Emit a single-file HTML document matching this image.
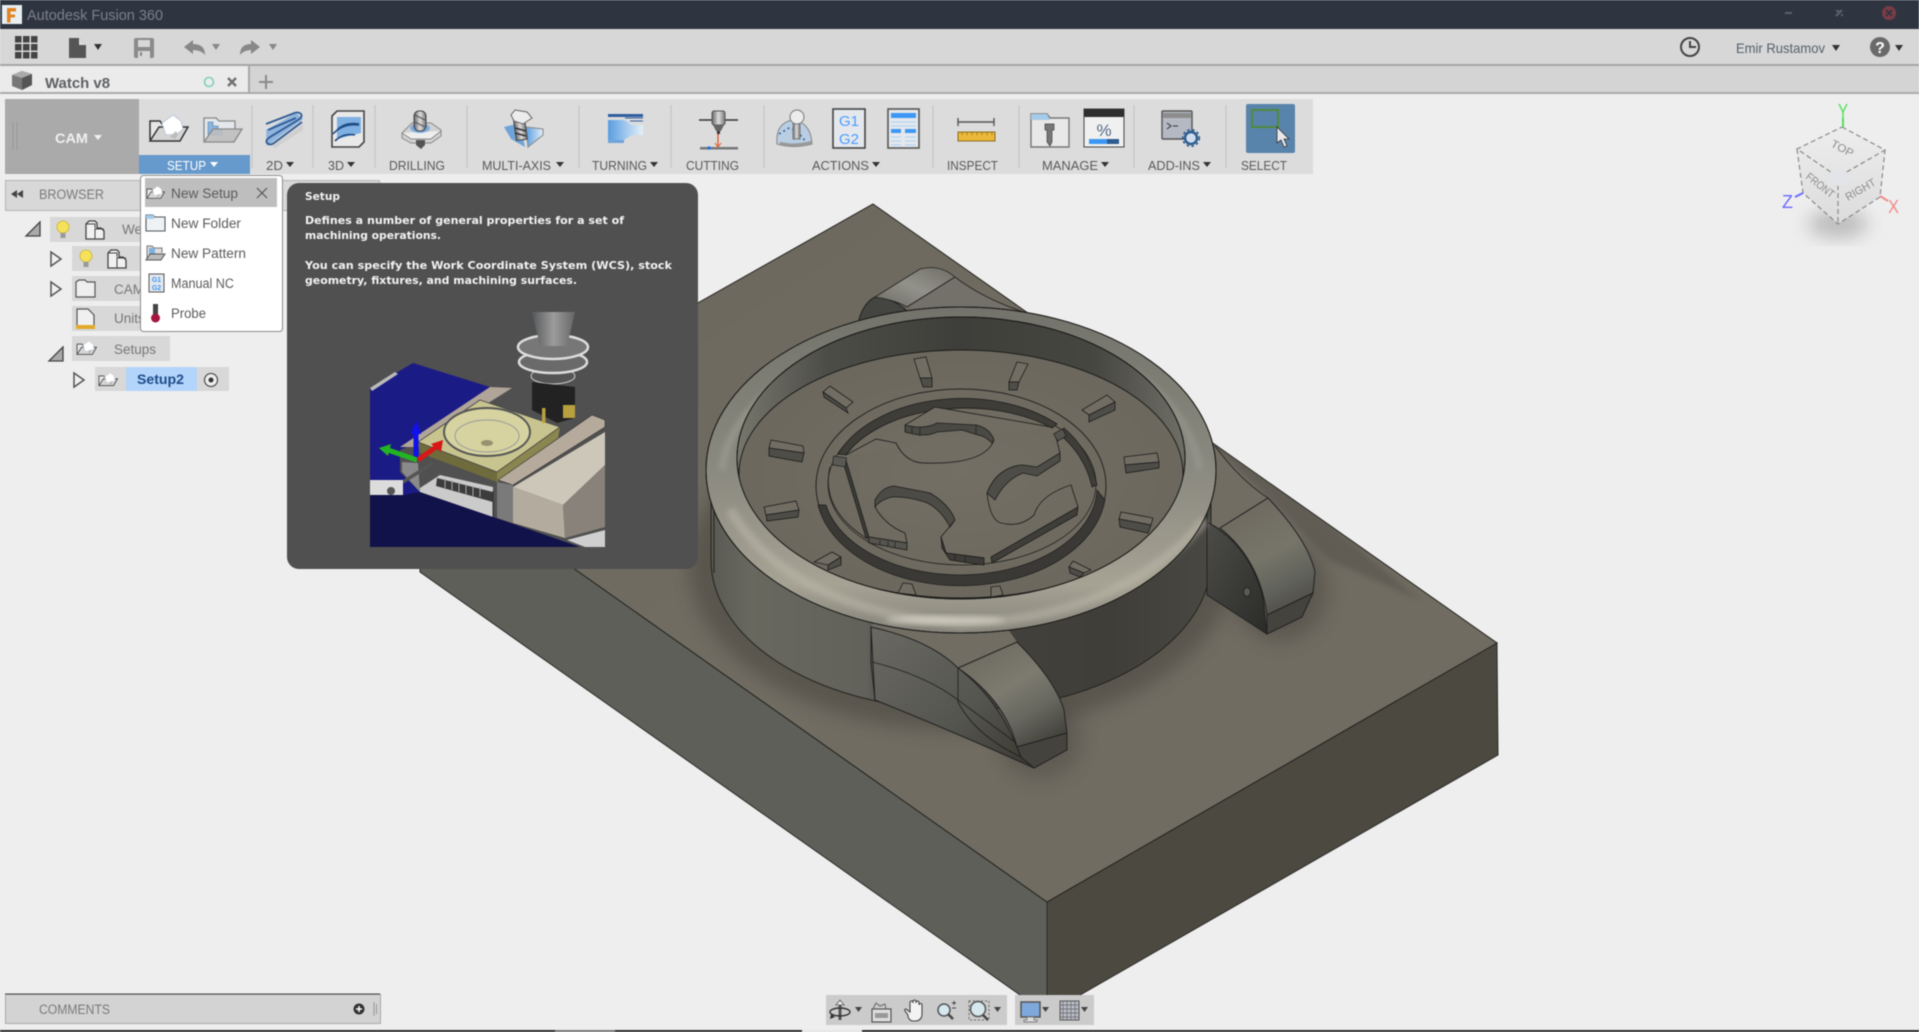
<!DOCTYPE html>
<html><head><meta charset="utf-8"><title>Autodesk Fusion 360</title>
<style>
html,body{margin:0;padding:0;background:#eee;width:1919px;height:1032px;overflow:hidden}
svg{display:block;position:absolute;left:0;top:0;filter:blur(.5px)}
text{font-family:"Liberation Sans",sans-serif}
.l{font-size:13px;fill:#5a5a5a}
.m{font-size:13.5px;fill:#5c5c5c}
.tt{font-family:"DejaVu Sans",sans-serif;font-weight:bold;font-size:10.5px;fill:#f2f2f2}
</style></head><body>
<svg width="1919" height="1032" viewBox="0 0 1919 1032" xmlns="http://www.w3.org/2000/svg">
<defs>
<linearGradient id="gTop" x1="0" y1="0" x2="1" y2="1"><stop offset="0" stop-color="#6b675d"/><stop offset=".5" stop-color="#716d63"/><stop offset="1" stop-color="#6f6b61"/></linearGradient>
<linearGradient id="gBody" x1="0" y1="0" x2="1" y2="0"><stop offset="0" stop-color="#5a5a54"/><stop offset=".08" stop-color="#68685f"/><stop offset=".31" stop-color="#62625b"/><stop offset=".37" stop-color="#454440"/><stop offset=".8" stop-color="#403e39"/><stop offset="1" stop-color="#4a4842"/></linearGradient>
<linearGradient id="gRing" x1="0" y1="0" x2="0" y2="1"><stop offset="0" stop-color="#74736b"/><stop offset=".5" stop-color="#8b8a80"/><stop offset=".85" stop-color="#a6a294"/><stop offset="1" stop-color="#85837a"/></linearGradient>
<linearGradient id="gWall" x1="0" y1="0" x2="1" y2="0"><stop offset="0" stop-color="#77766c"/><stop offset=".2" stop-color="#4d4d48"/><stop offset=".5" stop-color="#3e3e3a"/><stop offset=".8" stop-color="#474742"/><stop offset="1" stop-color="#6f6e66"/></linearGradient>
<radialGradient id="gDial"><stop offset="0" stop-color="#736f65"/><stop offset="1" stop-color="#6c685e"/></radialGradient>
<linearGradient id="gLug" gradientUnits="userSpaceOnUse" x1="985" y1="650" x2="1040" y2="745"><stop offset="0" stop-color="#6f6c62"/><stop offset=".4" stop-color="#7d7b70"/><stop offset=".7" stop-color="#67675f"/><stop offset="1" stop-color="#45443e"/></linearGradient>
<linearGradient id="gLug2" gradientUnits="userSpaceOnUse" x1="1240" y1="515" x2="1290" y2="610"><stop offset="0" stop-color="#6f6b61"/><stop offset=".45" stop-color="#777569"/><stop offset=".75" stop-color="#62635c"/><stop offset="1" stop-color="#4f4e48"/></linearGradient>
<linearGradient id="gWeb" x1="0" y1="0" x2="1" y2="1"><stop offset="0" stop-color="#6a6a63"/><stop offset=".6" stop-color="#55554f"/><stop offset="1" stop-color="#38372f"/></linearGradient>
<linearGradient id="gDark" x1="0" y1="0" x2="1" y2="1"><stop offset="0" stop-color="#4c4c48"/><stop offset="1" stop-color="#2b2b29"/></linearGradient>
<linearGradient id="gCyl" x1="0" y1="1" x2="1" y2="0"><stop offset="0" stop-color="#6c6c64"/><stop offset=".5" stop-color="#93928a"/><stop offset="1" stop-color="#6e6c64"/></linearGradient>
<linearGradient id="gBlue" x1="0" y1="0" x2="1" y2="0"><stop offset="0" stop-color="#5a9de0"/><stop offset="1" stop-color="#e4f0fa"/></linearGradient>
<linearGradient id="gSilver" x1="0" y1="0" x2="1" y2="0"><stop offset="0" stop-color="#666"/><stop offset=".5" stop-color="#ddd"/><stop offset="1" stop-color="#777"/></linearGradient>
<linearGradient id="gCube" x1="0" y1="0" x2="0" y2="1"><stop offset="0" stop-color="#ededed"/><stop offset="1" stop-color="#dcdcdc"/></linearGradient>
<linearGradient id="gCone" x1="0" y1="0" x2="1" y2="0"><stop offset="0" stop-color="#55585a"/><stop offset=".5" stop-color="#9c9c9c"/><stop offset="1" stop-color="#666"/></linearGradient>
<filter id="b6" x="-30%" y="-30%" width="160%" height="160%"><feGaussianBlur stdDeviation="9"/></filter>
<filter id="b2" x="-30%" y="-30%" width="160%" height="160%"><feGaussianBlur stdDeviation="3"/></filter>
<clipPath id="cTop"><polygon points="873,204 1497,643 1047,902 420,460"/></clipPath>
<clipPath id="cHole"><ellipse cx="961" cy="458" rx="224" ry="141"/></clipPath>
<symbol id="openf" viewBox="0 0 41 27"><path d="M2 25V6h10l2 3h9" fill="#e6e6e6" stroke="#333" stroke-width="1.500"/><path d="M2 26l9-14h29l-8 14z" fill="#d4d4d4" stroke="#333" stroke-width="1.500"/><path d="M14 8L25 0l8 6 2 8-6 5-11 1z" fill="#fff" stroke="#b5c4d8" stroke-width=".8"/><path d="M22 22l6-6 2 4-3 4z" fill="#bbb"/></symbol>
<symbol id="comp" viewBox="0 0 20 20"><path d="M1 19V4l3-3h6l2 2v5h4l3 3v8z" fill="#f1f1f1" stroke="#444" stroke-width="1.300"/><path d="M10 19V9h9M1 4h9v4" fill="none" stroke="#444"/></symbol>
<symbol id="bulb" viewBox="0 0 14 20"><circle cx="7" cy="7" r="6" fill="#f6e25a" stroke="#cdb94a"/><rect x="4.500" y="13" width="5" height="5" fill="#999"/></symbol>
</defs>

<rect width="1919" height="1032" fill="#eeeeee"/>

<!-- BLOCK -->
<polygon points="420,460 1047,902 1047,1014 420,572" fill="#5f5f59" stroke="#2a2a28"/>
<polygon points="1047,902 1497,643 1498,755 1047,1014" fill="#4c4941" stroke="#2a2a28"/>
<polygon points="873,204 1497,643 1047,902 420,460" fill="url(#gTop)" stroke="#23231f"/>
<g clip-path="url(#cTop)">
 <ellipse cx="961" cy="565" rx="272" ry="166" fill="#3a3832" opacity=".42" filter="url(#b6)"/>
 <ellipse cx="1040" cy="740" rx="42" ry="40" fill="#3a3832" opacity=".3" filter="url(#b6)"/>
 <ellipse cx="1280" cy="590" rx="48" ry="52" fill="#3a3832" opacity=".35" filter="url(#b6)"/>
 <path d="M1030,313 Q1190,420 1268,498 L1330,560 L1420,600 L1100,330Z" fill="#45433c" opacity=".35" filter="url(#b2)"/>
</g>

<!-- back lug -->
<path d="M857,330 Q860,305 875,297 Q895,298 908,312 L880,330Z" fill="#444441" stroke="#222"/>
<path d="M875,297 L920,269 Q940,264 955,277 L907,307 Q895,300 875,297Z" fill="url(#gCyl)" stroke="#222" stroke-width=".8"/>
<path d="M955,277 L907,307 L1000,330 L1030,314 Q985,300 955,277Z" fill="#74716a"/>
<path d="M955,277 Q985,300 1030,314" fill="none" stroke="#2a2a26"/>
<path d="M955,277 L907,307" stroke="#222" fill="none"/>

<!-- web right -->
<path d="M1215,446 Q1240,478 1268,498 L1220,528 L1207,522 L1190,470Z" fill="#716d63"/>
<path d="M1215,446 Q1240,480 1268,498 M1268,498 L1220,528" fill="none" stroke="#2a2a26"/>

<!-- body -->
<path d="M711,470 V560 A250,150 0 0 0 1211,560 V470 Z" fill="url(#gBody)" stroke="#23231f"/>
<path d="M714,470 V573 M1207,470 V595" stroke="#23231f" fill="none"/>

<!-- back right lug -->
<path d="M1207,522 Q1250,545 1263,598 L1267,634 L1207,595Z" fill="url(#gDark)" stroke="#222"/>
<ellipse cx="1247" cy="592" rx="3.500" ry="4.500" fill="#5a5a55" stroke="#222"/>
<path d="M1220,528 L1268,498 Q1308,540 1315,572 L1313,593 L1267,615 Q1260,560 1220,528Z" fill="url(#gLug2)" stroke="#222"/>
<path d="M1267,615 L1313,593 L1302,617 L1267,634Z" fill="#45433d" stroke="#222"/>

<!-- front lug -->
<path d="M871,627 Q925,645 958,668 L1017,642 L1005,625 L880,615Z" fill="#716d63"/>
<path d="M871,627 Q930,640 958,668 Q1000,700 1020,755 L1034,768 Q950,730 875,700Z" fill="url(#gWeb)" stroke="#222"/>
<path d="M872,662 Q925,675 958,700 M958,668 V702 Q975,735 1021,757 M958,700 L1015,742" fill="none" stroke="#222" stroke-width=".9"/>
<path d="M958,668 L1017,642 Q1055,680 1064,710 L1067,733 L1017,747 Q1005,700 958,668Z" fill="url(#gLug)" stroke="#222"/>
<path d="M1017,747 L1067,733 V750 L1034,768 L1021,757Z" fill="#45433d" stroke="#222"/>

<!-- torus -->
<ellipse cx="961" cy="470" rx="255" ry="163" fill="url(#gRing)" stroke="#23231f"/>
<path d="M730,510 Q790,610 961,624 Q1120,618 1205,520" fill="none" stroke="#bdb9ab" stroke-width="9" opacity=".55" filter="url(#b2)"/>
<ellipse cx="945" cy="620" rx="60" ry="4" fill="#e0dcd0" opacity=".7" filter="url(#b2)"/>
<path d="M722,470 Q730,395 860,338" fill="none" stroke="#a5a498" stroke-width="6" opacity=".6" filter="url(#b2)"/>
<path d="M1200,470 Q1190,410 1130,370" fill="none" stroke="#a0a098" stroke-width="6" opacity=".55" filter="url(#b2)"/>
<ellipse cx="961" cy="458" rx="224" ry="141" fill="url(#gWall)" stroke="#1c1c1a"/>
<g clip-path="url(#cHole)">
<ellipse cx="961" cy="474" rx="222" ry="124" fill="url(#gDial)" stroke="#1c1c1a"/>

<!-- inner rings -->
<ellipse cx="961" cy="486" rx="145" ry="97" fill="none" stroke="#23231f"/>
<ellipse cx="962" cy="484" rx="134" ry="81" fill="none" stroke="#23231f" stroke-width=".8"/>
<path d="M838,454 A134,88 0 0 1 1057,424 L1052,428 A130,78 0 0 0 846,455Z" fill="#3e3d38" stroke="#1c1c1a" stroke-width=".8"/>
<path d="M1064,428 Q1090,450 1097,485 L1092,487 Q1085,455 1058,433Z" fill="#3e3d38" stroke="#1c1c1a" stroke-width=".7"/>
<path d="M818,505 A145,97 0 0 0 1105,500 L1097,490 A137,88 0 0 1 826,505Z" fill="#3a3935" stroke="#1c1c1a" stroke-width=".7"/>
<path d="M843,462 L846,460 L869,537 L866,538Z" fill="#3a3a36" stroke="#1c1c1a" stroke-width=".7"/>
<path d="M830,467 Q820,510 869,540" fill="none" stroke="#23231f" stroke-width=".9"/>
<rect x="833" y="457" width="13" height="9" fill="#5a5954" stroke="#1c1c1a" stroke-width=".7" transform="rotate(8 840 461)"/>

<!-- blade 1 -->
<path d="M846,455 L876,439 L896,443 Q905,462 923,463 Q985,465 994,440 Q988,425 976,425 L937,423 Q925,430 905,425 L935,407 L1051,427Z" fill="#716d63"/>
<path d="M846,455 L876,439 L896,443 Q905,462 923,463 Q985,465 994,440 M905,425 L935,407 L1051,427" fill="none" stroke="#23231f" stroke-width=".9"/>
<path d="M905,425 Q925,430 937,423 L976,425 Q990,428 994,440 L992,443 Q985,436 978,435 L962,430 L937,432 Q925,438 905,432Z" fill="#4a4944" stroke="#1c1c1a" stroke-width=".8"/>
<path d="M912,427V434M920,428V436M976,425V434" stroke="#222" stroke-width=".8"/>

<!-- blade 2 -->
<path d="M1060,453 L1060,461 L1037,476 L1023,473 Q1005,480 995,500 L987,493 Q992,480 1001,473 Q1012,465 1023,465 L1037,467Z" fill="#4d4c47" stroke="#1c1c1a" stroke-width=".8"/>
<path d="M1060,453 L1055,433" stroke="#23231f" stroke-width=".9"/>
<path d="M987,493 Q990,520 1001,523 Q1020,528 1034,515 Q1040,495 1071,485 L1078,507" fill="none" stroke="#23231f" stroke-width=".9"/>
<path d="M1078,507 L991,557 L992,563 L1077,515Z" fill="#3f3e39" stroke="#1c1c1a" stroke-width=".8"/>
<rect x="1055" y="431" width="10" height="8" fill="#55544f" stroke="#1c1c1a" stroke-width=".7" transform="rotate(-30 1060 435)"/>

<!-- blade 3 -->
<path d="M875,500 Q882,487 894,486 L930,493 Q950,505 955,520 L950,527 Q940,508 925,502 Q905,496 892,497 Q880,500 875,507Z" fill="#4c4b46" stroke="#1c1c1a" stroke-width=".8"/>
<path d="M875,507 Q885,525 905,533 L907,543 L869,537 M955,520 L941,537 L946,553 L984,558" fill="none" stroke="#23231f" stroke-width=".9"/>
<path d="M869,537 L907,543 V550 L869,543Z" fill="#55544f" stroke="#1c1c1a" stroke-width=".8"/>
<path d="M941,537 L946,553 L984,558 V565 L950,560 L942,548Z" fill="#3d3c38" stroke="#1c1c1a" stroke-width=".8"/>
<path d="M880,540V545M888,541V547M895,542V548M955,555V561M965,556V563" stroke="#222" stroke-width=".8"/>

<!-- ticks -->
<g stroke="#1c1c1a" stroke-width=".8">
<g fill="#716d63">
<polygon points="914,359 926,357 932,378 920,378"/><polygon points="1017,362 1028,364 1019,382 1009,382"/><polygon points="1107,395 1115,402 1089,415 1082,410"/><polygon points="1124,457 1157,453 1159,462 1125,465"/><polygon points="1121,512 1153,518 1151,525 1119,519"/><polygon points="1073,561 1091,570 1084,573 1069,567"/><polygon points="991,587 1000,586 1003,595 991,597"/><polygon points="903,583 912,584 916,595 898,593"/><polygon points="814,562 832,552 841,557 828,565"/><polygon points="764,507 796,501 799,510 766,515"/><polygon points="771,440 803,446 804,453 769,448"/><polygon points="830,386 853,402 846,408 823,392"/>
</g>
<g fill="#4e4d48">
<polygon points="920,378 932,378 932,387 923,387"/><polygon points="1009,382 1019,382 1017,390 1009,390"/><polygon points="1089,415 1115,402 1115,410 1089,422"/><polygon points="1125,465 1159,462 1159,468 1126,473"/><polygon points="1119,519 1151,525 1148,533 1120,527"/><polygon points="1069,567 1084,573 1080,577 1070,573"/><polygon points="828,565 841,557 841,565 828,570"/><polygon points="766,515 799,510 798,517 767,521"/><polygon points="769,448 804,453 802,462 769,456"/><polygon points="823,392 846,408 848,413 824,397"/>
</g>
</g>
</g>
<ellipse cx="961" cy="458" rx="224" ry="141" fill="none" stroke="#1c1c1a"/>
<ellipse cx="961" cy="470" rx="255" ry="163" fill="none" stroke="#1c1c1a"/>
<path d="M871,627 V663 L875,700" fill="none" stroke="#222"/>

<!-- TITLE BAR -->
<rect width="1919" height="29" fill="#2e3541"/>
<rect x="2" y="5" width="20" height="19" fill="#e8eef2"/>
<path d="M7,8h9v3.500h-5.500v3h4.500v3h-4.500v5h-3.500z" fill="#e08426"/>
<text x="27" y="20" font-size="14.500" fill="#7c818a" textLength="136" lengthAdjust="spacingAndGlyphs">Autodesk Fusion 360</text>
<rect x="1785" y="12" width="7" height="2" fill="#5c626c"/>
<path d="M1836,16l6-6 M1836,11h3M1842,14v2" stroke="#5c626c" stroke-width="2"/>
<circle cx="1889" cy="13" r="7" fill="#7a3c46"/>
<path d="M1886,10l6,6m0-6l-6,6" stroke="#2e3541" stroke-width="1.600"/>

<!-- QAT -->
<rect y="29" width="1919" height="35" fill="#d7d7d7"/>
<rect y="64" width="1919" height="2" fill="#a6a6a6"/>
<g fill="#444">
<rect x="15" y="36" width="6.500" height="6.500"/><rect x="23" y="36" width="6.500" height="6.500"/><rect x="31" y="36" width="6.500" height="6.500"/>
<rect x="15" y="44" width="6.500" height="6.500"/><rect x="23" y="44" width="6.500" height="6.500"/><rect x="31" y="44" width="6.500" height="6.500"/>
<rect x="15" y="52" width="6.500" height="6.500"/><rect x="23" y="52" width="6.500" height="6.500"/><rect x="31" y="52" width="6.500" height="6.500"/>
</g>
<path d="M69,38h10l7,7v13H69z" fill="#555"/><path d="M79,38v7h7" fill="#ddd"/>
<path d="M94,44h8l-4,6z" fill="#333"/>
<path d="M134,40q0-2 2-2h16q2,0 2,2v16q0,2-2,2h-16q-2,0-2-2z" fill="#8a8a8a"/><rect x="138" y="40" width="12" height="7" fill="#d7d7d7"/><rect x="138" y="51" width="12" height="7" fill="#d7d7d7"/><rect x="140" y="52" width="2" height="4" fill="#888"/>
<path d="M184,47l9-7v4q12,0 12,11q-4-5-12-5v4z" fill="#888"/>
<path d="M212,44h8l-4,6z" fill="#888"/>
<path d="M260,47l-9-7v4q-11,0-11,11q4-5 11-5v4z" fill="#888"/>
<path d="M269,44h8l-4,6z" fill="#888"/>
<circle cx="1690" cy="47" r="9" fill="none" stroke="#444" stroke-width="2"/><path d="M1690,41v6h6" fill="none" stroke="#444" stroke-width="2"/>
<text x="1736" y="53" font-size="14" fill="#55606e" textLength="89" lengthAdjust="spacingAndGlyphs">Emir Rustamov</text>
<path d="M1832,45h8l-4,6z" fill="#333"/>
<circle cx="1880" cy="47" r="10" fill="#6a6a6a"/><text x="1880" y="53" font-size="16" font-weight="bold" fill="#fff" text-anchor="middle">?</text>
<path d="M1895,45h8l-4,6z" fill="#333"/>

<!-- TAB BAR -->
<rect y="66" width="1919" height="27" fill="#d4d4d4"/>
<rect y="92" width="1919" height="2" fill="#ababab"/>
<rect y="66" width="248" height="26" fill="#ebebeb"/>
<rect x="248" y="66" width="2" height="27" fill="#a8a8a8"/>
<path d="M12,75l10-4 10,3v11l-10,5-10-4z" fill="#777"/><path d="M12,75l10,3 10-4-10-3z" fill="#aaa"/><path d="M22,78v12l10-5V74z" fill="#555"/>
<text x="45" y="88" font-size="14.500" font-weight="bold" fill="#5f6064" textLength="65" lengthAdjust="spacingAndGlyphs">Watch v8</text>
<circle cx="209" cy="82" r="4.500" fill="none" stroke="#7fd0bc" stroke-width="1.600"/>
<path d="M228,78l8,8m0-8l-8,8" stroke="#707070" stroke-width="2.400"/>
<path d="M259,82h14m-7-7v14" stroke="#8a8a8a" stroke-width="2"/>

<!-- RIBBON -->
<rect x="5" y="99" width="1308" height="75" fill="#dcdcdc"/>
<rect x="5" y="99" width="134" height="75" fill="#aaaaaa"/>
<path d="M13,122v28m4-28v28" stroke="#999" stroke-width="1"/>
<text x="55" y="143" font-size="14" font-weight="bold" fill="#f0f0f0" textLength="33" lengthAdjust="spacingAndGlyphs">CAM</text>
<path d="M94,135h8l-4,5z" fill="#f2f2f2"/>
<rect x="139" y="155" width="111" height="19" fill="#6699cc"/>
<g stroke="#c8c8c8" stroke-width="1.400"><path d="M252,105V168M313,105V168M375,105V168M467,105V168M579,105V168M671,105V168M764,105V168M933,105V168M1019,105V168M1134,105V168M1226,105V168"/></g>
<text x="167" y="170" font-size="13" fill="#fff" textLength="39" lengthAdjust="spacingAndGlyphs">SETUP</text>
<path d="M210,162h8l-4,5z" fill="#fff"/>
<g class="l">
<text class="l" x="266" y="170" textLength="17" lengthAdjust="spacingAndGlyphs">2D</text>
<text class="l" x="328" y="170" textLength="16" lengthAdjust="spacingAndGlyphs">3D</text>
<text class="l" x="389" y="170" textLength="56" lengthAdjust="spacingAndGlyphs">DRILLING</text>
<text class="l" x="482" y="170" textLength="69" lengthAdjust="spacingAndGlyphs">MULTI-AXIS</text>
<text class="l" x="592" y="170" textLength="55" lengthAdjust="spacingAndGlyphs">TURNING</text>
<text class="l" x="686" y="170" textLength="53" lengthAdjust="spacingAndGlyphs">CUTTING</text>
<text class="l" x="812" y="170" textLength="57" lengthAdjust="spacingAndGlyphs">ACTIONS</text>
<text class="l" x="947" y="170" textLength="51" lengthAdjust="spacingAndGlyphs">INSPECT</text>
<text class="l" x="1042" y="170" textLength="56" lengthAdjust="spacingAndGlyphs">MANAGE</text>
<text class="l" x="1148" y="170" textLength="52" lengthAdjust="spacingAndGlyphs">ADD-INS</text>
<text class="l" x="1241" y="170" textLength="46" lengthAdjust="spacingAndGlyphs">SELECT</text>
</g>
<g fill="#333">
<path d="M286,162h8l-4,5z"/><path d="M347,162h8l-4,5z"/><path d="M556,162h8l-4,5z"/><path d="M650,162h8l-4,5z"/><path d="M872,162h8l-4,5z"/><path d="M1101,162h8l-4,5z"/><path d="M1203,162h8l-4,5z"/>
</g>

<!-- ribbon icons -->
<use href="#openf" x="148" y="115" width="41" height="27"/>
<g>
<path d="M204,141V118h12l3,3h16v8" fill="#e4e8ec" stroke="#888" stroke-width="1.300"/>
<path d="M208,122h5v4h5v4h4v5h-14z" fill="#8ab4dd" stroke="#6d93b8" stroke-width=".8"/>
<path d="M204,142l9-13h29l-8,13z" fill="#bdbdbd" fill-opacity=".85" stroke="#888" stroke-width="1.300"/>
</g>
<g>
<path d="M272,146L303,124V130L275,148Z" fill="#cfcfcf"/>
<path d="M266,130L296,113l7,6-36,27z" fill="#8fb4de"/>
<g fill="none" stroke="#2f5a94" stroke-width="1.800"><path d="M266,124L292,114q6-3 9,0 2,3-3,6L270,137q-5,3-3,6 3,3 7,0L302,122"/><path d="M268,130L296,118"/></g>
</g>
<g>
<path d="M332,116l5-5h27v31l-5,5h-27z" fill="#e9e9e9" stroke="#444" stroke-width="1.600"/>
<path d="M337,117h24v16l-24,6z" fill="#7fb0e2"/>
<path d="M333,134q10-11 26-9M337,130q8-8 22-6M335,141q8-8 20-6" fill="none" stroke="#1f4c86" stroke-width="1.600"/>
</g>
<g>
<path d="M402,133l10-10h19l10,7v6l-10,7h-20l-9-5z" fill="#d2d2d2" stroke="#888"/>
<path d="M402,133l9,6h20l10-8" fill="#eee" stroke="#888"/>
<ellipse cx="420" cy="128" rx="10" ry="5" fill="#7fb0e2"/>
<rect x="414" y="111" width="12" height="20" rx="5" fill="url(#gSilver)" stroke="#444"/>
<path d="M416,140h9v5l-4,4-5-4z" fill="#555"/>
<path d="M415,115l10,5M415,122l10,5" stroke="#555"/>
</g>
<g>
<path d="M504,127l16-4 5,24-14-8z" fill="#6fa4da"/>
<path d="M526,127l17,2v6l-15,12z" fill="url(#gBlue)" stroke="#888"/>
<rect x="515" y="118" width="11" height="22" fill="url(#gSilver)" stroke="#444" transform="rotate(-8 520 130)"/>
<path d="M515,110l12,2 5,6-9,6-9-3-3-6z" fill="#ececec" stroke="#666"/>
<path d="M515,128l11,3M515,133l11,3" stroke="#333" stroke-width="1.600"/>
</g>
<g>
<path d="M608,114h35v3h-35z" fill="#2e5da0"/>
<path d="M608,120h16l8,5h11v10h-11l-8,5h-16z" fill="url(#gBlue)"/>
<path d="M625,118h18M630,121h13" stroke="#2e5da0"/>
<path d="M608,140h16v3h-16z" fill="#6fa4da"/>
</g>
<g>
<path d="M699,120h13M725,120h13" stroke="#333" stroke-width="1.500"/>
<rect x="712" y="111" width="13" height="14" rx="2" fill="url(#gSilver)" stroke="#555"/>
<path d="M713,125h11l-3,6h-5z" fill="#666"/><path d="M717,131h3v3h-3z" fill="#333"/>
<path d="M718,134V147" stroke="#e2582c" stroke-width="1.300"/><path d="M715,143l3,4 3-4" fill="none" stroke="#e2582c"/>
<rect x="700" y="147" width="38" height="2.500" fill="#777"/>
<circle cx="709" cy="148" r="1.800" fill="#2277dd"/>
</g>
<g>
<path d="M777,144q-2-20 15-24 19,2 20,24-18,5-35,0z" fill="#b9cde3" stroke="#888"/>
<path d="M780,143q14,4 32,-1" fill="none" stroke="#999" stroke-width="2.500"/>
<path d="M779,134l10-6 9,4 8,10" fill="none" stroke="#2e5b94" stroke-dasharray="2 3" stroke-width="1.500"/>
<rect x="793" y="119" width="7" height="20" fill="url(#gSilver)" stroke="#777"/>
<circle cx="797" cy="117" r="7" fill="#ececec" stroke="#777"/>
</g>
<g>
<rect x="833" y="109" width="32" height="39" fill="#e4e8ed" stroke="#444" stroke-width="1.600"/>
<text x="849" y="126" font-size="15" fill="#4b9dff" text-anchor="middle">G1</text>
<text x="849" y="144" font-size="15" fill="#4b9dff" text-anchor="middle">G2</text>
</g>
<g>
<rect x="888" y="109" width="31" height="39" fill="#e4e8ed" stroke="#555" stroke-width="1.600"/>
<rect x="891" y="113" width="25" height="5" fill="#3d97f5"/>
<path d="M891,122h25M891,126h25" stroke="#a9d2f3"/>
<rect x="891" y="129" width="10" height="4" fill="#3d97f5"/><rect x="905" y="129" width="11" height="4" fill="#3d97f5"/>
<path d="M891,137h10M905,137h11M891,141h10M905,141h11M891,145h10M905,145h11" stroke="#a9d2f3"/>
</g>
<g>
<path d="M958,122h36M958,118v8M994,118v8" stroke="#555" stroke-width="1.400" fill="none"/>
<rect x="958" y="132" width="37" height="9" fill="#eab83a" stroke="#8a6d20"/>
<path d="M962,132v3M967,132v3M972,132v3M977,132v3M982,132v3M987,132v3M992,132v3" stroke="#8a6d20" stroke-width=".7"/>
</g>
<g>
<path d="M1031,147V114h16l3,4h19v29z" fill="#e8e8e8" stroke="#777" stroke-width="1.400"/>
<path d="M1031,114h16l3,6h-19z" fill="#a5cbe8"/>
<path d="M1045,124h9v6h-2v12l-2,4-3-4v-12h-2z" fill="#777" stroke="#444" stroke-width=".7"/>
</g>
<g>
<rect x="1084" y="109" width="40" height="38" fill="#f0f0f0" stroke="#444"/>
<rect x="1084" y="109" width="40" height="8" fill="#2f2f2f"/>
<text x="1104" y="136" font-size="17" fill="#556a87" text-anchor="middle">%</text>
<rect x="1089" y="139" width="30" height="5" fill="#3d97f5"/><rect x="1107" y="139" width="12" height="5" fill="#2d5c8f"/>
</g>
<g>
<rect x="1162" y="111" width="30" height="28" rx="1" fill="#b5b9c4" stroke="#555" stroke-width="1.400"/>
<rect x="1163" y="113" width="28" height="5" fill="#8d8d8d"/>
<path d="M1167,123l4,3-4,3M1173,126h5" fill="none" stroke="#333"/>
<circle cx="1191" cy="138" r="6" fill="#cfdcec" stroke="#2d5c8f" stroke-width="2.400"/>
<circle cx="1191" cy="138" r="8.300" fill="none" stroke="#2d5c8f" stroke-width="1.600" stroke-dasharray="2.500 2.500"/>
</g>
<rect x="1246" y="104" width="49" height="49" rx="2" fill="#5884ab"/>
<rect x="1252" y="110" width="26" height="17" fill="none" stroke="#4f8a3d" stroke-width="2"/>
<path d="M1277,127V143l4-3 3,7 3-1-3-7h5z" fill="#e8e8e8" stroke="#333" stroke-width=".8"/>

<!-- VIEWCUBE -->
<ellipse cx="1838" cy="224" rx="30" ry="14" fill="#888" opacity=".5" filter="url(#b6)"/>
<polygon points="1842,127 1885,150 1880,197 1838,224 1803,193 1797,149" fill="url(#gCube)"/>
<g fill="none" stroke="#8a8a8a" stroke-dasharray="5 3" stroke-width="1.200">
<path d="M1842,127L1885,150L1838,177L1797,149Z"/><path d="M1797,149L1803,193L1838,224L1880,197L1885,150M1838,177V224"/>
</g>
<polygon points="1830,174 1838,168 1848,174 1847,185 1838,186 1831,182" fill="#e2e4ea"/>
<g font-size="11" fill="#8c8c8c">
<text transform="translate(1830,146) rotate(28)" textLength="24" lengthAdjust="spacingAndGlyphs">TOP</text>
<text transform="translate(1805,178) rotate(38)" textLength="33" lengthAdjust="spacingAndGlyphs">FRONT</text>
<text transform="translate(1848,201) rotate(-30)" textLength="33" lengthAdjust="spacingAndGlyphs">RIGHT</text>
</g>
<path d="M1843,127V118" stroke="#52e05a" stroke-width="2"/><text x="1838" y="118" font-size="20" fill="#52e05a" textLength="10" lengthAdjust="spacingAndGlyphs">Y</text>
<path d="M1803,193l-8,4" stroke="#6a6aff" stroke-width="2"/><text x="1782" y="208" font-size="18" fill="#6a6aff" textLength="11" lengthAdjust="spacingAndGlyphs">Z</text>
<path d="M1880,196l8,5" stroke="#f08a8a" stroke-width="2"/><text x="1888" y="213" font-size="18" fill="#f08a8a" textLength="11" lengthAdjust="spacingAndGlyphs">X</text>

<!-- BROWSER -->
<rect x="5.500" y="180.500" width="374" height="30" fill="#d8d8d8" stroke="#b5b5b5"/>
<path d="M11,194l6-4v8zM17,194l6-4v8z" fill="#444"/>
<text x="39" y="199" font-size="13.500" fill="#7b7b7b" textLength="65" lengthAdjust="spacingAndGlyphs">BROWSER</text>
<g fill="#d8d8d8">
<rect x="50" y="217" width="90" height="25"/><rect x="72" y="246" width="68" height="25"/><rect x="72" y="276" width="68" height="25"/><rect x="72" y="306" width="68" height="25"/><rect x="72" y="336" width="98" height="25"/><rect x="95" y="367" width="134" height="24"/>
</g>
<path d="M26,236L40,222V236Z" fill="#aaa" stroke="#444" stroke-width="1.300"/>
<path d="M49,361L63,347V361Z" fill="#aaa" stroke="#444" stroke-width="1.300"/>
<g fill="#f0f0f0" stroke="#555" stroke-width="1.500">
<path d="M51,252L61,259L51,266Z"/><path d="M51,282L61,289L51,296Z"/><path d="M74,373L84,380L74,387Z"/>
</g>
<use href="#bulb" x="56" y="220" width="14" height="20"/>
<use href="#bulb" x="79" y="249" width="14" height="20"/>
<use href="#comp" x="85" y="220" width="20" height="20"/>
<use href="#comp" x="107" y="249" width="20" height="20"/>
<path d="M76,297V282l3-2h6l2,2h8v15z" fill="#eee" stroke="#555" stroke-width="1.200"/>
<path d="M77,326V309h11l6,6v11z" fill="#f0f0f0" stroke="#555" stroke-width="1.200"/><rect x="76" y="325" width="19" height="4" fill="#e3a92c"/>
<use href="#openf" x="76" y="339" width="21" height="18"/>
<use href="#openf" x="98" y="371" width="20" height="17"/>
<g class="m">
<text class="m" x="122" y="234" font-size="13.500" style="fill:#777">We</text>
<text class="m" x="114" y="294" style="fill:#777">CAM</text>
<text class="m" x="114" y="323" style="fill:#777">Units</text>
<text class="m" x="114" y="354" style="fill:#777" textLength="42" lengthAdjust="spacingAndGlyphs">Setups</text>
</g>
<rect x="126" y="367" width="71" height="24" fill="#b3d4fb"/>
<text x="137" y="384" font-size="13.500" font-weight="bold" fill="#1d4d8a" textLength="47" lengthAdjust="spacingAndGlyphs">Setup2</text>
<circle cx="211" cy="380" r="6.500" fill="#eee" stroke="#555" stroke-width="1.300"/><circle cx="211" cy="380" r="2.500" fill="#333"/>

<!-- DROPDOWN -->
<rect x="140.500" y="175.500" width="142" height="156" rx="3" fill="#fff" stroke="#8c8c8c"/>
<rect x="145" y="178" width="132" height="29" fill="#bebebe"/>
<use href="#openf" x="146" y="185" width="19" height="15"/>
<path d="M146,231V215h7l2,2h10v14z" fill="#eef2f5" stroke="#555" stroke-width="1.100"/><rect x="146" y="215" width="8" height="4" fill="#a5cbe8"/>
<path d="M147,259V246h5l2,2h8v5" fill="#ddd" stroke="#777"/><rect x="149" y="248" width="6" height="6" fill="#7fb0e2"/><path d="M146,260l4-6h15l-4,6z" fill="#bbb" stroke="#555"/>
<rect x="149" y="274" width="15" height="18" fill="#e4e8ed" stroke="#555"/>
<text x="156.500" y="282" font-size="7" font-weight="bold" fill="#3d97f5" text-anchor="middle">G1</text>
<text x="156.500" y="290" font-size="7" font-weight="bold" fill="#3d97f5" text-anchor="middle">G2</text>
<rect x="153" y="304" width="5" height="14" fill="#444"/><circle cx="155.500" cy="318" r="4.500" fill="#a5163f"/>
<g>
<text class="m" x="171" y="198" textLength="67" lengthAdjust="spacingAndGlyphs">New Setup</text>
<text class="m" x="171" y="228" textLength="70" lengthAdjust="spacingAndGlyphs">New Folder</text>
<text class="m" x="171" y="258" textLength="75" lengthAdjust="spacingAndGlyphs">New Pattern</text>
<text class="m" x="171" y="288" textLength="63" lengthAdjust="spacingAndGlyphs">Manual NC</text>
<text class="m" x="171" y="318" textLength="35" lengthAdjust="spacingAndGlyphs">Probe</text>
</g>
<path d="M257,188l10,10m0-10l-10,10" stroke="#555" stroke-width="1.200"/>

<!-- TOOLTIP -->
<rect x="287" y="183" width="411" height="386" rx="12" fill="#505050"/>
<text class="tt" x="305" y="200" textLength="35" lengthAdjust="spacingAndGlyphs">Setup</text>
<text class="tt" x="305" y="224" textLength="319" lengthAdjust="spacingAndGlyphs">Defines a number of general properties for a set of</text>
<text class="tt" x="305" y="239" textLength="136" lengthAdjust="spacingAndGlyphs">machining operations.</text>
<text class="tt" x="305" y="269" textLength="367" lengthAdjust="spacingAndGlyphs">You can specify the Work Coordinate System (WCS), stock</text>
<text class="tt" x="305" y="284" textLength="272" lengthAdjust="spacingAndGlyphs">geometry, fixtures, and machining surfaces.</text>

<g>
<path d="M370,388L413,363L490,387L418,442L400,450V472L420,492L493,517L580,547H370Z" fill="#1b1b86"/>
<path d="M370,480L403,495L420,492L493,517L580,547H370Z" fill="#12124a"/>
<path d="M370,388L395,372L398,374L372,391Z" fill="#bbb"/>
<path d="M490,387L512,388L418,447H400Z" fill="#b0a598"/>
<path d="M402,462L418,463L420,492L402,472Z" fill="#8a8a8a"/>
<path d="M420,488L440,475L493,487V517L420,492Z" fill="#cbcbcb"/>
<path d="M437,478L493,492V502L436,486Z" fill="#3c3c3c"/>
<path d="M445,478l0,10M452,480l0,10M459,482l0,10M466,484l0,10M473,486l0,10M480,487l0,10" stroke="#aaa"/>
<path d="M403,482L433,463" stroke="#555" stroke-width="3.500"/>
<rect x="370" y="480" width="33" height="15" fill="#dcdcdc"/><circle cx="391" cy="491" r="4" fill="#555"/>
<path d="M418,442L497,472V482L420,453Z" fill="#6f6b3c"/>
<path d="M497,472L560,427L558,438L497,482Z" fill="#8b8650"/>
<path d="M480,400L560,427L497,472L418,442Z" fill="#c8c48f" stroke="#444" stroke-width=".8"/>
<ellipse cx="487" cy="432" rx="43" ry="24" fill="#d6d3a0" stroke="#555" stroke-width="2"/>
<ellipse cx="487" cy="436" rx="32" ry="16" fill="none" stroke="#999"/>
<ellipse cx="487" cy="443" rx="6" ry="3" fill="#999070"/>
<path d="M592,415L605,420V427L513,485L498,480Z" fill="#b5aa9b" stroke="#333" stroke-width=".6"/>
<path d="M497,482L513,485V523L497,518Z" fill="#7a7a7a"/>
<path d="M513,487L605,432V465L563,505Z" fill="#cdc7ba"/>
<path d="M513,487L563,505L565,538L513,523Z" fill="#b3ab9e"/>
<path d="M563,505L605,465V527L565,538Z" fill="#88827a"/>
<path d="M567,540L605,530V547H585Z" fill="#cfcfcf"/>
<path d="M493,517V491" stroke="#333"/>
<ellipse cx="553" cy="376" rx="22" ry="8" fill="#555" stroke="#ccc"/>
<ellipse cx="553" cy="362" rx="34" ry="11" fill="#6a6a6a" stroke="#ddd" stroke-width="2.500"/>
<ellipse cx="553" cy="347" rx="35" ry="12" fill="#777" stroke="#ddd" stroke-width="2.500"/>
<path d="M532,312H575L567,346H540Z" fill="url(#gCone)"/>
<path d="M532,382L575,387V418L557,423L532,410Z" fill="#222"/>
<rect x="563" y="405" width="12" height="13" fill="#b8a040"/>
<rect x="542" y="408" width="3.500" height="15" fill="#b8a040"/>
<path d="M416,460V432" stroke="#1111ee" stroke-width="5"/><path d="M411,434l5-13 5,13z" fill="#1111ee"/>
<path d="M417,460L388,450" stroke="#22b522" stroke-width="5"/><path d="M391,444L379,448l9,8z" fill="#22b522"/>
<path d="M418,460L436,447" stroke="#d61818" stroke-width="5"/><path d="M431,444l12-4-2,12z" fill="#d61818"/>
</g>

<!-- COMMENTS -->
<rect x="5.500" y="994.500" width="375" height="29" fill="#d3d3d3" stroke="#aaa"/>
<path d="M5,994H380" stroke="#444"/>
<text x="39" y="1014" font-size="13.500" fill="#7b7b7b" textLength="71" lengthAdjust="spacingAndGlyphs">COMMENTS</text>
<circle cx="359" cy="1009" r="5.500" fill="#333"/><path d="M356,1009h6m-3-3v6" stroke="#fff" stroke-width="1.500"/>
<path d="M374,1002v14M376.500,1004v10" stroke="#999"/>

<!-- NAV BAR -->
<rect x="826" y="995" width="181" height="30" fill="#cbcbcb"/>
<rect x="1015" y="995" width="79" height="30" fill="#cbcbcb"/>
<g fill="#444">
<path d="M855,1007h7l-3.500,5z"/><path d="M994,1007h7l-3.500,5z"/><path d="M1042,1007h7l-3.500,5z"/><path d="M1081,1007h7l-3.500,5z"/>
</g>
<g>
<path d="M840,1001v19" stroke="#555" stroke-width="3"/><path d="M836,1005l4-5 4,5z" fill="#eee" stroke="#555" stroke-width=".8"/>
<ellipse cx="840" cy="1012" rx="10" ry="4" fill="none" stroke="#333" stroke-width="1.400"/><path d="M831,1014l-1,5 5-2z" fill="#333"/>
</g>
<g>
<rect x="872" y="1009" width="19" height="13" fill="#ddd" stroke="#555" stroke-width="1.200"/><rect x="875" y="1013" width="13" height="5" fill="#999"/>
<path d="M873,1009l3-6 4,3 5-2 1,5" fill="none" stroke="#666"/>
</g>
<path d="M908,1015l-3-4q-1-2 1-2l4,3v-9q0-2 1.500-2t1.500,2v-1q0-2 1.500-2t1.500,2v1q0-2 1.500-2t1.500,2v2q0-1.500 1.500-1.500t1.500,1.500v9q0,6-6,7h-3q-3,0-5-4z" fill="#f3f3f3" stroke="#444" stroke-width="1.100"/>
<g>
<circle cx="944" cy="1010" r="6" fill="#d5e8ee" stroke="#555" stroke-width="1.500"/><path d="M948,1014l5,5" stroke="#444" stroke-width="2.500"/>
<path d="M952,1003h4m-2-2v4M952,1008h4" stroke="#444"/>
</g>
<g>
<rect x="969" y="1001" width="20" height="19" fill="none" stroke="#666" stroke-dasharray="2 2"/>
<circle cx="978" cy="1009" r="7.500" fill="#d5e8ee" stroke="#555" stroke-width="1.500"/><path d="M983,1015l5,5" stroke="#444" stroke-width="2.500"/>
</g>
<g>
<rect x="1021" y="1002" width="19" height="15" fill="#7fa8dc" stroke="#555" stroke-width="1.500"/>
<path d="M1027,1017h7v3h3v2h-13v-2h3z" fill="#ddd" stroke="#666" stroke-width=".7"/>
</g>
<g>
<rect x="1060" y="1001" width="19" height="19" fill="#b9bcc8" stroke="#555"/>
<path d="M1063,1001v19M1067,1001v19M1071,1001v19M1075,1001v19M1060,1005h19M1060,1009h19M1060,1013h19M1060,1017h19" stroke="#666" stroke-width=".7"/>
</g>

<!-- bottom edge -->
<rect y="1030" width="1919" height="2" fill="#2a2a2a"/>
<rect x="802" y="1030" width="60" height="2" fill="#e6e6e6"/>
<rect x="555" y="1030" width="60" height="2" fill="#777"/>
</svg>
</body></html>
